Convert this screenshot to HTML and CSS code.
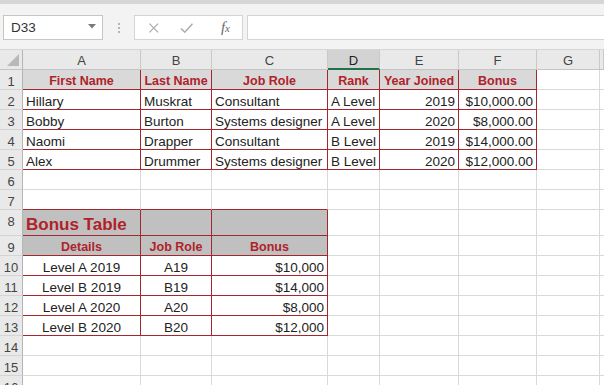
FILE: index.html
```html
<!DOCTYPE html>
<html lang="en">
<head>
  <meta charset="UTF-8" />
  <title>Bonus Table - Excel</title>
  <link rel="stylesheet" href="styles.css">
</head>
<body>
  <div class="ribbon-edge"></div>
  <div class="formula-bar">
    <div class="name-box">
      <span>D33</span>
      <svg width="8" height="5" viewBox="0 0 8 5"><path d="M0 0h8L4 4.5z" fill="#7a7a7a"/></svg>
    </div>
    <div class="grip"><i></i><i></i><i></i></div>
    <div class="fx-buttons">
      <svg width="12" height="12" viewBox="0 0 12 12"><path d="M1.5 1.5l9 9M10.5 1.5l-9 9" stroke="#ababab" stroke-width="1.3" fill="none"/></svg>
      <svg width="14" height="12" viewBox="0 0 14 12"><path d="M1 6.5l4 4L13 1.5" stroke="#ababab" stroke-width="1.5" fill="none"/></svg>
      <span class="fx">f<small>x</small></span>
    </div>
    <div class="formula-input"></div>
  </div>

  <div class="sheet">
    <div class="row heads">
      <div class="corner"><svg width="12" height="12" viewBox="0 0 12 12"><path d="M12 0v12H0z" fill="#b9b9b9"/></svg></div>
      <div class="ch">A</div><div class="ch">B</div><div class="ch">C</div>
      <div class="ch sel">D</div><div class="ch">E</div><div class="ch">F</div>
      <div class="ch">G</div><div class="ch"></div>
    </div>

    <div class="row">
      <div class="rh">1</div>
      <div class="c t h">First Name</div><div class="c t h">Last Name</div><div class="c t h">Job Role</div>
      <div class="c t h">Rank</div><div class="c t h">Year Joined</div><div class="c t h">Bonus</div>
      <div class="c"></div><div class="c"></div>
    </div>
    <div class="row">
      <div class="rh">2</div>
      <div class="c t">Hillary</div><div class="c t">Muskrat</div><div class="c t">Consultant</div>
      <div class="c t">A Level</div><div class="c t r">2019</div><div class="c t r">$10,000.00</div>
      <div class="c"></div><div class="c"></div>
    </div>
    <div class="row">
      <div class="rh">3</div>
      <div class="c t">Bobby</div><div class="c t">Burton</div><div class="c t">Systems designer</div>
      <div class="c t">A Level</div><div class="c t r">2020</div><div class="c t r">$8,000.00</div>
      <div class="c"></div><div class="c"></div>
    </div>
    <div class="row">
      <div class="rh">4</div>
      <div class="c t">Naomi</div><div class="c t">Drapper</div><div class="c t">Consultant</div>
      <div class="c t">B Level</div><div class="c t r">2019</div><div class="c t r">$14,000.00</div>
      <div class="c"></div><div class="c"></div>
    </div>
    <div class="row">
      <div class="rh">5</div>
      <div class="c t">Alex</div><div class="c t">Drummer</div><div class="c t">Systems designer</div>
      <div class="c t">B Level</div><div class="c t r">2020</div><div class="c t r">$12,000.00</div>
      <div class="c"></div><div class="c"></div>
    </div>
    <div class="row">
      <div class="rh">6</div>
      <div class="c"></div><div class="c"></div><div class="c"></div><div class="c"></div>
      <div class="c"></div><div class="c"></div><div class="c"></div><div class="c"></div>
    </div>
    <div class="row">
      <div class="rh">7</div>
      <div class="c rb"></div><div class="c rb"></div><div class="c rb"></div><div class="c"></div>
      <div class="c"></div><div class="c"></div><div class="c"></div><div class="c"></div>
    </div>
    <div class="row tall">
      <div class="rh">8</div>
      <div class="c t g title">Bonus Table</div><div class="c t g"></div><div class="c t g"></div>
      <div class="c"></div><div class="c"></div><div class="c"></div><div class="c"></div><div class="c"></div>
    </div>
    <div class="row">
      <div class="rh">9</div>
      <div class="c t g h">Details</div><div class="c t g h">Job Role</div><div class="c t g h">Bonus</div>
      <div class="c"></div><div class="c"></div><div class="c"></div><div class="c"></div><div class="c"></div>
    </div>
    <div class="row">
      <div class="rh">10</div>
      <div class="c t m">Level A 2019</div><div class="c t m">A19</div><div class="c t r">$10,000</div>
      <div class="c"></div><div class="c"></div><div class="c"></div><div class="c"></div><div class="c"></div>
    </div>
    <div class="row">
      <div class="rh">11</div>
      <div class="c t m">Level B 2019</div><div class="c t m">B19</div><div class="c t r">$14,000</div>
      <div class="c"></div><div class="c"></div><div class="c"></div><div class="c"></div><div class="c"></div>
    </div>
    <div class="row">
      <div class="rh">12</div>
      <div class="c t m">Level A 2020</div><div class="c t m">A20</div><div class="c t r">$8,000</div>
      <div class="c"></div><div class="c"></div><div class="c"></div><div class="c"></div><div class="c"></div>
    </div>
    <div class="row">
      <div class="rh">13</div>
      <div class="c t m">Level B 2020</div><div class="c t m">B20</div><div class="c t r">$12,000</div>
      <div class="c"></div><div class="c"></div><div class="c"></div><div class="c"></div><div class="c"></div>
    </div>
    <div class="row">
      <div class="rh">14</div>
      <div class="c"></div><div class="c"></div><div class="c"></div><div class="c"></div>
      <div class="c"></div><div class="c"></div><div class="c"></div><div class="c"></div>
    </div>
    <div class="row">
      <div class="rh">15</div>
      <div class="c"></div><div class="c"></div><div class="c"></div><div class="c"></div>
      <div class="c"></div><div class="c"></div><div class="c"></div><div class="c"></div>
    </div>
    <div class="row">
      <div class="rh">16</div>
      <div class="c"></div><div class="c"></div><div class="c"></div><div class="c"></div>
      <div class="c"></div><div class="c"></div><div class="c"></div><div class="c"></div>
    </div>
  </div>
</body>
</html>
```

FILE: styles.css
```css
* {
  box-sizing: border-box;
}
body {
  margin: 0;
  width: 604px;
  height: 385px;
  overflow: hidden;
  background: #fff;
  font-family: "Liberation Sans", Arial, sans-serif;
  font-size: 13.5px;
  color: #222;
}
.ribbon-edge {
  height: 4px;
  background: #d6d6d6;
}
.formula-bar {
  height: 46px;
  background: #f3f3f3;
  border-bottom: 1px solid #d6d6d6;
  display: flex;
  align-items: flex-start;
  padding: 11px 0 0 3px;
}
.name-box {
  width: 100px;
  height: 25px;
  background: #fff;
  border: 1px solid #c6c6c6;
  display: flex;
  align-items: center;
  justify-content: space-between;
  padding: 0 6px 0 7px;
  font-size: 13.5px;
  color: #333;
}
.name-box svg {
  margin-top: -3px;
}
.grip {
  width: 31px;
  height: 25px;
  display: flex;
  flex-direction: column;
  align-items: center;
  justify-content: center;
  gap: 2px;
}
.grip i {
  width: 2px;
  height: 2px;
  background: #b5b5b5;
}
.fx-buttons {
  width: 109px;
  height: 25px;
  background: #fff;
  border: 1px solid #d4d4d4;
  display: flex;
  align-items: center;
  padding: 0 12px 0 13px;
  gap: 18px;
}
.fx-buttons svg:nth-child(2) {
  margin-left: 2px;
}
.fx {
  margin-left: 10px;
  font-family: "Liberation Serif", serif;
  font-style: italic;
  font-size: 15px;
  color: #6a6a6a;
}
.fx small {
  font-size: 11px;
}
.formula-input {
  flex: 1;
  height: 25px;
  margin-left: 4px;
  background: #fff;
  border: 1px solid #d4d4d4;
  border-right: none;
}

.row {
  display: grid;
  grid-template-columns: 23px 118px 71px 116px 52px 79px 78px 63px 1fr;
  grid-template-rows: 20px;
}
.row.tall {
  grid-template-rows: 26px;
}
.corner,
.ch,
.rh {
  background: #e9e9e9;
  color: #444;
  font-size: 13px;
  text-align: center;
  line-height: 22px;
  border-right: 1px solid #c9c9c9;
  border-bottom: 1px solid #c3c3c3;
}
.corner {
  display: flex;
  align-items: flex-end;
  justify-content: flex-end;
  padding: 0 3px 3px 0;
  border-right: 1px solid #b5b5b5;
}
.ch.sel {
  background: #d3d3d3;
  color: #222;
  border-bottom: 2px solid #217346;
}
.rh {
  border-right: 1px solid #b5b5b5;
  border-bottom: 1px solid #d4d4d4;
  line-height: 23px;
}
.c {
  border-right: 1px solid #d9d9d9;
  border-bottom: 1px solid #d9d9d9;
  padding: 0 3px;
  line-height: 23px;
  white-space: nowrap;
}
.c.t {
  border-color: #a3282e;
}
.c.rb {
  border-bottom-color: #a3282e;
}
.c.h {
  background: #d9d9d9;
  color: #b0222a;
  font-weight: bold;
  font-size: 12.5px;
  text-align: center;
}
.c.g {
  background: #c0c0c0;
}
.c.r {
  text-align: right;
}
.c.m {
  text-align: center;
}
.c.title {
  color: #b0222a;
  font-weight: bold;
  font-size: 17px;
  line-height: 29px;
  padding-left: 3px;
}
```
